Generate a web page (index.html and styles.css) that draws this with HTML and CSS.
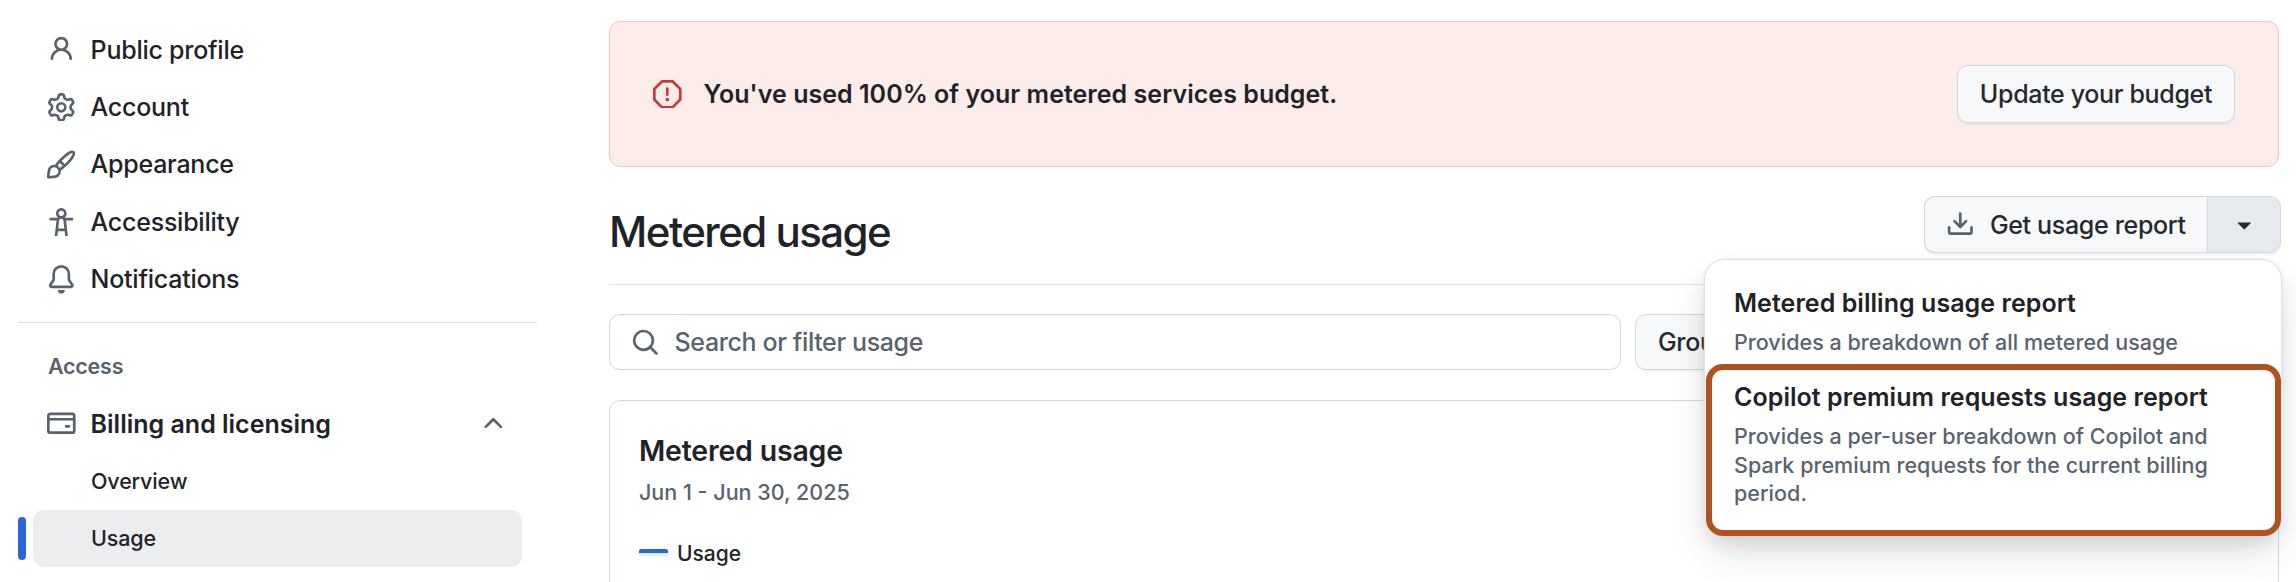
FILE: index.html
```
<!DOCTYPE html>
<html lang="en">
<head>
<meta charset="utf-8">
<title>Metered usage</title>
<link rel="stylesheet" href="styles.css">
</head>
<body>
<div class="page">
  <nav class="sidebar">
    <ul class="nav-list">
      <li class="nav-item"><svg class="icon" viewBox="0 0 16 16"><path d="M10.561 8.073a6.005 6.005 0 0 1 3.432 5.142.75.75 0 1 1-1.498.07 4.5 4.5 0 0 0-8.99 0 .75.75 0 0 1-1.498-.07 6.004 6.004 0 0 1 3.431-5.142 3.999 3.999 0 1 1 5.123 0ZM10.5 5a2.5 2.5 0 1 0-5 0 2.5 2.5 0 0 0 5 0Z"/></svg><span>Public profile</span></li>
      <li class="nav-item"><svg class="icon" viewBox="0 0 16 16"><path d="M8 0a8.2 8.2 0 0 1 .701.031C9.444.095 9.99.645 10.16 1.29l.288 1.107c.018.066.079.158.212.224.231.114.454.243.668.386.123.082.233.09.299.071l1.103-.303c.644-.176 1.392.021 1.82.63.27.385.506.792.704 1.218.315.675.111 1.422-.364 1.891l-.814.806c-.049.048-.098.147-.088.294.016.257.016.515 0 .772-.01.147.038.246.088.294l.814.806c.475.469.679 1.216.364 1.891a7.977 7.977 0 0 1-.704 1.217c-.428.61-1.176.807-1.82.63l-1.102-.302c-.067-.019-.177-.011-.3.071a5.909 5.909 0 0 1-.668.386c-.133.066-.194.158-.211.224l-.29 1.106c-.168.646-.715 1.196-1.458 1.26a8.006 8.006 0 0 1-1.402 0c-.743-.064-1.289-.614-1.458-1.26l-.289-1.106c-.018-.066-.079-.158-.212-.224a5.738 5.738 0 0 1-.668-.386c-.123-.082-.233-.09-.299-.071l-1.103.303c-.644.176-1.392-.021-1.82-.63a8.12 8.12 0 0 1-.704-1.218c-.315-.675-.111-1.422.363-1.891l.815-.806c.05-.048.098-.147.088-.294a6.214 6.214 0 0 1 0-.772c.01-.147-.038-.246-.088-.294l-.815-.806C.635 6.045.431 5.298.746 4.623a7.92 7.92 0 0 1 .704-1.217c.428-.61 1.176-.807 1.82-.63l1.102.302c.067.019.177.011.3-.071.214-.143.437-.272.668-.386.133-.066.194-.158.211-.224l.29-1.106C6.009.645 6.556.095 7.299.03 7.53.01 7.764 0 8 0Zm-.571 1.525c-.036.003-.108.036-.137.146l-.289 1.105c-.147.561-.549.967-.998 1.189-.173.086-.34.183-.5.29-.417.278-.97.423-1.529.27l-1.103-.303c-.109-.03-.175.016-.195.045-.22.312-.412.644-.573.99-.014.031-.021.11.059.19l.815.806c.411.406.562.957.53 1.456a4.709 4.709 0 0 0 0 .582c.032.499-.119 1.05-.53 1.456l-.815.806c-.081.08-.073.159-.059.19.162.346.353.677.573.989.02.03.085.076.195.046l1.102-.303c.56-.153 1.113-.008 1.53.27.161.107.328.204.501.29.447.222.85.629.997 1.189l.289 1.105c.029.109.101.143.137.146a6.6 6.6 0 0 0 1.142 0c.036-.003.108-.036.137-.146l.289-1.105c.147-.561.549-.967.998-1.189.173-.086.34-.183.5-.29.417-.278.97-.423 1.529-.27l1.103.303c.109.029.175-.016.195-.045.22-.313.411-.644.573-.99.014-.031.021-.11-.059-.19l-.815-.806c-.411-.406-.562-.957-.53-1.456a4.709 4.709 0 0 0 0-.582c-.032-.499.119-1.05.53-1.456l.815-.806c.081-.08.073-.159.059-.19a6.464 6.464 0 0 0-.573-.989c-.02-.03-.085-.076-.195-.046l-1.102.303c-.56.153-1.113.008-1.53-.27a4.44 4.44 0 0 0-.501-.29c-.447-.222-.85-.629-.997-1.189l-.289-1.105c-.029-.11-.101-.143-.137-.146a6.6 6.6 0 0 0-1.142 0ZM11 8a3 3 0 1 1-6 0 3 3 0 0 1 6 0ZM9.5 8a1.5 1.5 0 1 0-3.001.001A1.5 1.5 0 0 0 9.5 8Z"/></svg><span>Account</span></li>
      <li class="nav-item"><svg class="icon" viewBox="0 0 16 16"><path d="M11.134 1.535c.7-.509 1.416-.942 2.076-1.155.649-.21 1.463-.267 2.069.34.603.601.568 1.411.368 2.07-.202.668-.624 1.39-1.125 2.096-1.011 1.424-2.496 2.987-3.775 4.249-1.098 1.084-2.132 1.839-3.04 2.3a3.744 3.744 0 0 1-1.055 3.217c-.431.431-1.065.691-1.657.861-.614.177-1.294.287-1.914.357A21.151 21.151 0 0 1 .797 16H.743l.007-.75H.749L.742 16a.75.75 0 0 1-.743-.742l.743-.008-.742.007v-.054a21.25 21.25 0 0 1 .13-2.284c.067-.647.187-1.287.358-1.914.17-.591.43-1.226.86-1.657a3.746 3.746 0 0 1 3.227-1.054c.466-.893 1.225-1.907 2.314-2.982 1.271-1.255 2.833-2.75 4.245-3.777ZM1.62 13.089c-.051.464-.086.929-.104 1.395.466-.018.932-.053 1.396-.104a10.511 10.511 0 0 0 1.668-.309c.526-.151.856-.325 1.011-.48a2.25 2.25 0 1 0-3.182-3.182c-.155.155-.329.485-.48 1.01a10.515 10.515 0 0 0-.309 1.67Zm10.396-10.34c-1.224.89-2.605 2.189-3.822 3.384l1.718 1.718c1.21-1.205 2.51-2.597 3.387-3.833.47-.662.78-1.227.912-1.662.134-.444.032-.551.009-.575h-.001V1.78c-.014-.014-.113-.113-.548.027-.432.14-.995.462-1.655.942Zm-4.832 7.266-.001.001a9.859 9.859 0 0 0 1.63-1.142L7.155 7.216a9.7 9.7 0 0 0-1.161 1.607c.482.302.889.71 1.19 1.192Z"/></svg><span>Appearance</span></li>
      <li class="nav-item"><svg class="icon" viewBox="0 0 16 16"><path d="M9.923 5.302c.063.063.122.129.178.198H14A.75.75 0 0 1 14 7h-3.3l.578 5.163.362 2.997a.75.75 0 0 1-1.49.18L9.868 13H6.132l-.282 2.34a.75.75 0 0 1-1.49-.18l.362-2.997L5.3 7H2a.75.75 0 0 1 0-1.5h3.9a2.54 2.54 0 0 1 .176-.198 3 3 0 1 1 3.847 0ZM9.2 7.073h-.001a1.206 1.206 0 0 0-2.398 0L6.305 11.5h3.39ZM9.5 3a1.5 1.5 0 1 0-3.001.001A1.5 1.5 0 0 0 9.5 3Z"/></svg><span>Accessibility</span></li>
      <li class="nav-item"><svg class="icon" viewBox="0 0 16 16"><path d="M8 16a2 2 0 0 0 1.985-1.75c.017-.137-.097-.25-.235-.25h-3.5c-.138 0-.252.113-.235.25A2 2 0 0 0 8 16ZM3 5a5 5 0 0 1 10 0v2.947c0 .05.015.098.042.139l1.703 2.555A1.519 1.519 0 0 1 13.482 13H2.518a1.516 1.516 0 0 1-1.263-2.36l1.703-2.554A.255.255 0 0 0 3 7.947Zm5-3.5A3.5 3.5 0 0 0 4.5 5v2.947c0 .346-.102.683-.294.97l-1.703 2.556a.017.017 0 0 0-.003.01l.001.006c0 .002.002.004.004.006l.006.004.007.001h10.964l.007-.001.006-.004.004-.006.001-.007a.017.017 0 0 0-.003-.01l-1.703-2.554a1.745 1.745 0 0 1-.294-.97V5A3.5 3.5 0 0 0 8 1.5Z"/></svg><span>Notifications</span></li>
    </ul>
    <h2 class="nav-heading"><span>Access</span></h2>
    <ul class="nav-list">
      <li class="nav-item nav-parent"><svg class="icon" viewBox="0 0 16 16"><path d="M10.75 9a.75.75 0 0 0 0 1.5h1.5a.75.75 0 0 0 0-1.5h-1.5Z"/><path d="M0 3.75C0 2.784.784 2 1.75 2h12.5c.966 0 1.75.784 1.75 1.75v8.5A1.75 1.75 0 0 1 14.25 14H1.75A1.75 1.75 0 0 1 0 12.25ZM14.5 6.5h-13v5.75c0 .138.112.25.25.25h12.5a.25.25 0 0 0 .25-.25Zm0-2.75a.25.25 0 0 0-.25-.25H1.75a.25.25 0 0 0-.25.25V5h13Z"/></svg><span>Billing and licensing</span><svg class="icon chevron" viewBox="0 0 16 16"><path d="M3.22 10.53a.749.749 0 0 1 0-1.06l4.25-4.25a.749.749 0 0 1 1.06 0l4.25 4.25a.749.749 0 1 1-1.06 1.06L8 6.811 4.28 10.53a.749.749 0 0 1-1.06 0Z"/></svg></li>
      <li class="nav-item nav-sub"><span>Overview</span></li>
      <li class="nav-item nav-sub nav-current"><span>Usage</span></li>
    </ul>
  </nav>

  <main class="main">
    <section class="banner">
      <svg class="icon banner-icon" viewBox="0 0 16 16"><path d="M4.47.22A.749.749 0 0 1 5 0h6c.199 0 .389.079.53.22l4.25 4.25c.141.14.22.331.22.53v6a.749.749 0 0 1-.22.53l-4.25 4.25A.749.749 0 0 1 11 16H5a.749.749 0 0 1-.53-.22L.22 11.53A.749.749 0 0 1 0 11V5c0-.199.079-.389.22-.53Zm.84 1.28L1.5 5.31v5.38l3.81 3.81h5.38l3.81-3.81V5.31L10.69 1.5ZM8 4a.75.75 0 0 1 .75.75v3.5a.75.75 0 0 1-1.5 0v-3.5A.75.75 0 0 1 8 4Zm0 8a1 1 0 1 1 0-2 1 1 0 0 1 0 2Z"/></svg>
      <strong class="banner-text">You've used 100% of your metered services budget.</strong>
      <button class="button banner-button"><span>Update your budget</span></button>
    </section>

    <header class="page-header">
      <h1 class="page-title">Metered usage</h1>
      <div class="split">
        <button class="button split-main"><svg class="icon" viewBox="0 0 16 16"><path d="M2.75 14A1.75 1.75 0 0 1 1 12.25v-2.5a.75.75 0 0 1 1.5 0v2.5c0 .138.112.25.25.25h10.5a.25.25 0 0 0 .25-.25v-2.5a.75.75 0 0 1 1.5 0v2.5A1.75 1.75 0 0 1 13.25 14Z"/><path d="M7.25 7.689V2a.75.75 0 0 1 1.5 0v5.689l1.97-1.969a.749.749 0 1 1 1.06 1.06l-3.25 3.25a.749.749 0 0 1-1.06 0L4.22 6.78a.749.749 0 1 1 1.06-1.06l1.97 1.969Z"/></svg><span>Get usage report</span></button>
        <button class="button split-toggle" aria-label="Choose report"><svg class="icon" viewBox="0 0 16 16"><path d="m4.427 7.427 3.396 3.396a.25.25 0 0 0 .354 0l3.396-3.396A.25.25 0 0 0 11.396 7H4.604a.25.25 0 0 0-.177.427Z"/></svg></button>
        <div class="menu">
          <div class="menu-item">
            <div class="menu-title">Metered billing usage report</div>
            <div class="menu-desc">Provides a breakdown of all metered usage</div>
          </div>
          <div class="menu-item menu-item-marked">
            <div class="menu-title">Copilot premium requests usage report</div>
            <div class="menu-desc">Provides a per-user breakdown of Copilot and<br>Spark premium requests for the current billing<br>period.</div>
          </div>
        </div>
      </div>
    </header>

    <div class="toolbar">
      <div class="search"><svg class="icon" viewBox="0 0 16 16"><path d="M10.68 11.74a6 6 0 0 1-7.922-8.982 6 6 0 0 1 8.982 7.922l3.04 3.04a.749.749 0 0 1-.326 1.275.749.749 0 0 1-.734-.215ZM11.5 7a4.499 4.499 0 1 0-8.997 0A4.499 4.499 0 0 0 11.5 7Z"/></svg><span class="search-field"><span>Search or filter usage</span></span></div>
      <button class="button group-button">Group</button>
    </div>

    <section class="card">
      <h2 class="card-title">Metered usage</h2>
      <p class="card-date">Jun 1 - Jun 30, 2025</p>
      <div class="legend"><span class="legend-mark"></span><span>Usage</span></div>
    </section>
  </main>
</div>
</body>
</html>
```

FILE: styles.css
```
* { box-sizing: border-box; }

body {
  margin: 0;
  background: #fff;
  color: #1f2328;
  font-family: Inter, "Liberation Sans", sans-serif;
  font-size: 25px;
  font-weight: 450;
  overflow: hidden;
}

h1, h2, p, ul { margin: 0; padding: 0; font-weight: inherit; }
ul { list-style: none; }

.page {
  display: flex;
  width: 2296px;
  height: 582px;
  overflow: hidden;
}

.icon {
  flex: none;
  width: 28.6px;
  height: 28.6px;
  fill: #59636e;
}

/* Sidebar */
.sidebar { width: 609px; padding: 21px 72px 0 18px; flex: none; }

.nav-item {
  display: flex;
  align-items: center;
  height: 57.4px;
  padding-left: 29px;
  gap: 15px;
  letter-spacing: -.25px;
  white-space: nowrap;
}

.nav-heading {
  display: flex;
  align-items: center;
  height: 73px;
  margin-top: 14px;
  padding: 14px 0 0 30px;
  border-top: 1px solid #d9dde3;
  color: #59636e;
  font-size: 21.5px;
  font-weight: 600;
  letter-spacing: -.25px;
}

.nav-parent { font-weight: 600; letter-spacing: 0; }
.chevron { margin-left: auto; margin-right: 29px; }

.nav-sub {
  margin: 0 15px 0 15px;
  padding-left: 58px;
  font-size: 21.5px;
  letter-spacing: -.15px;
}

.nav-current {
  position: relative;
  background: #ecedef;
  border-radius: 11px;
}

.nav-current::before {
  content: "";
  position: absolute;
  left: -15px;
  top: 7px;
  width: 8px;
  height: 43px;
  border-radius: 4px;
  background: #2d66d6;
}

/* Main column */
.main { width: 1670px; padding-top: 21px; flex: none; }

.banner {
  display: flex;
  align-items: center;
  height: 146px;
  padding: 0 43px 0 43px;
  border: 1px solid #f8c4c2;
  border-radius: 11px;
  background: #fcecea;
}

.banner-icon { fill: #c6383b; margin-right: 22px; }
.banner-text { font-weight: 600; letter-spacing: .03px; white-space: nowrap; }

.button {
  display: flex;
  align-items: center;
  justify-content: center;
  height: 57px;
  border: 1px solid #d1d9e0;
  border-radius: 11px;
  background: #f6f8fa;
  box-shadow: 0 2px 2px rgba(31, 35, 40, .05);
  color: #25292e;
  font: inherit;
  font-weight: 500;
  letter-spacing: -.33px;
  white-space: nowrap;
}

.banner-button { width: 278px; height: 58px; margin-left: auto; }

.page-header {
  display: flex;
  justify-content: space-between;
  height: 118px;
  padding-top: 29px;
  border-bottom: 1px solid #dfe3e8;
}

.page-title {
  height: 71px;
  line-height: 71px;
  font-size: 42px;
  font-weight: 500;
  letter-spacing: -1.55px;
  white-space: nowrap;
}

.split {
  position: relative;
  display: flex;
  width: 357px;
  height: 57px;
  margin-right: -2px;
}

.split-main { width: 283px; gap: 15px; padding: 0; border-radius: 11px 0 0 11px; border-right: 0; }
.split-toggle { width: 74px; padding: 0; border-radius: 0 11px 11px 0; background: #e6eaef; }
.split-toggle .icon { fill: #25292e; }

/* Dropdown over the page content */
.menu {
  position: absolute;
  z-index: 2;
  top: 63px;
  right: -1px;
  width: 578px;
  height: 277px;
  padding-top: 28px;
  border: 1px solid #dfe4ea;
  border-radius: 21px;
  background: #fff;
  box-shadow: 0 0 0 1px rgba(209, 217, 224, .3), 0 11px 22px -6px rgba(37, 41, 46, .16), 0 20px 40px -4px rgba(37, 41, 46, .12);
}

.menu-item { height: 76px; padding-left: 29px; white-space: nowrap; }
.menu-item-marked {
  height: 172px;
  margin: 0 0 0 1px;
  padding: 14px 0 0 22px;
  border: 6px solid #b0521d;
  border-radius: 17px;
}
.menu-title { height: 30px; line-height: 30px; font-weight: 600; letter-spacing: .05px; }
.menu-desc { padding-top: 10px; line-height: 28.5px; font-size: 21.5px; color: #59636e; letter-spacing: .03px; }
.menu-item-marked .menu-title { margin-top: -2px; }

.toolbar { display: flex; gap: 14px; padding-top: 29px; }

.search {
  display: flex;
  align-items: center;
  width: 1012px;
  height: 56px;
  padding-left: 21px;
  border: 1px solid #d1d9e0;
  border-radius: 11px;
  color: #59636e;
  letter-spacing: -.38px;
  white-space: nowrap;
}
.search-field {
  flex: 1;
  display: flex;
  align-items: center;
  height: 54px;
  margin-left: 15px;
  border-radius: 11px;
  box-shadow: inset 0 2px 1px -1px rgba(31, 35, 40, .05);
}

.group-button { width: 200px; height: 56px; padding-left: 22px; justify-content: flex-start; }

.card {
  height: 300px;
  margin-top: 30px;
  padding: 33px 29px;
  border: 1px solid #d1d9e0;
  border-radius: 11px;
}
.card-title { height: 34px; line-height: 34px; font-size: 28.5px; font-weight: 600; letter-spacing: -.2px; }
.card-date { height: 30px; margin-top: 9px; line-height: 30px; font-size: 21.5px; color: #59636e; }
.legend {
  display: flex;
  align-items: center;
  height: 30px;
  margin-top: 31px;
  gap: 9px;
  font-size: 21px;
}
.legend-mark {
  width: 29px;
  height: 10px;
  margin-top: 2px;
  border-top: 4px solid #2d66d6;
  border-radius: 2px;
  background: linear-gradient(#dbe6fa, #fff);
}
```
